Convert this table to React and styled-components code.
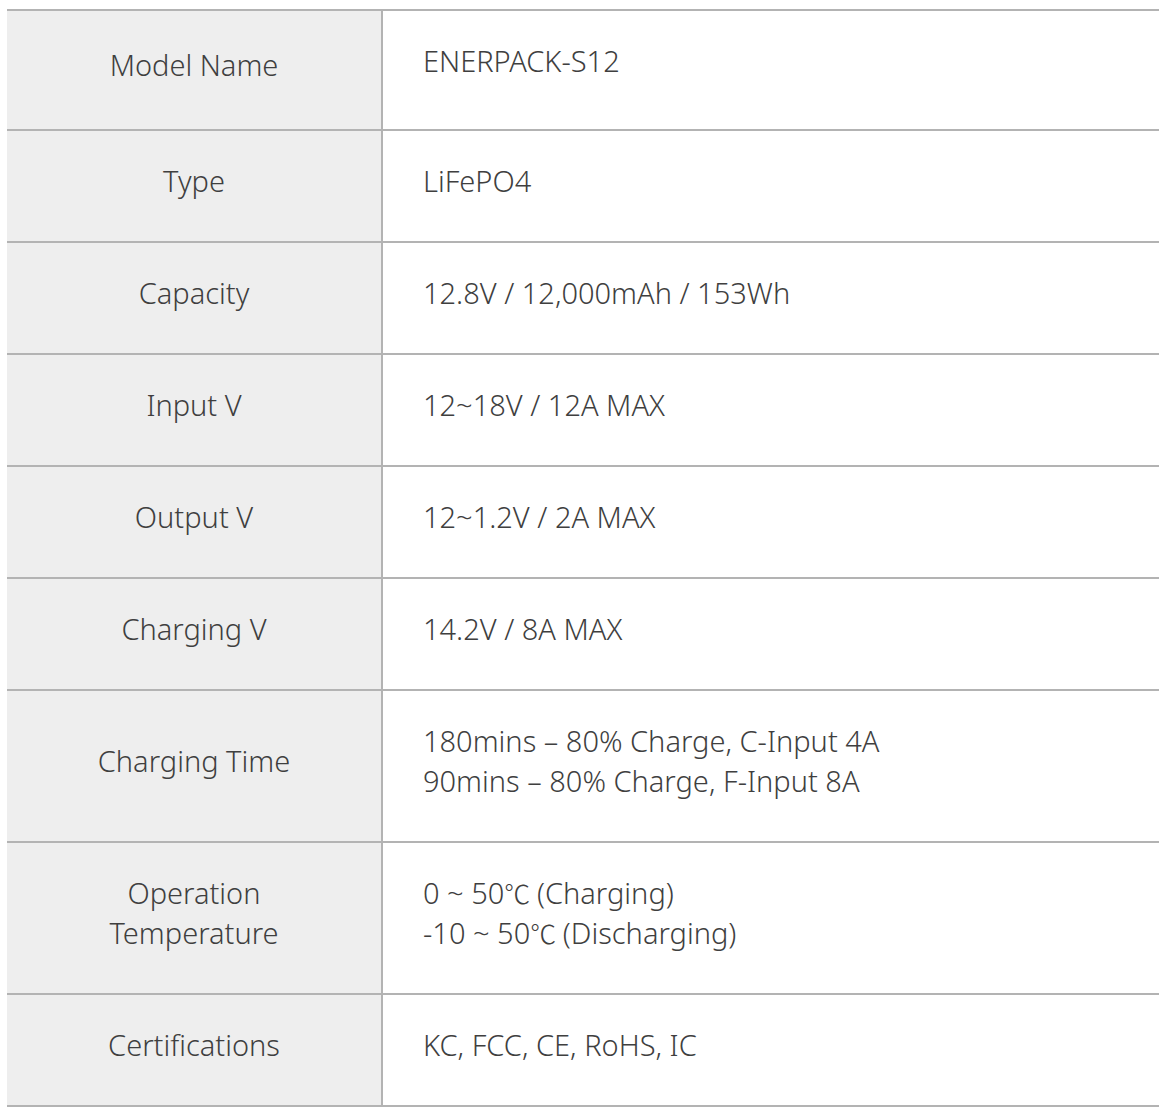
import React from "react";
import styled, { createGlobalStyle } from "styled-components";

const Global = createGlobalStyle`
  html, body { margin: 0; padding: 0; background: #ffffff; }
  body { font-family: "Noto Sans", "Noto Sans CJK KR", sans-serif; }
`;

const Page = styled.div`
  padding: 9px 6px 0 7px;
`;

const Table = styled.div`
  border-top: 2px solid #b3b3b3;
`;

const Row = styled.div`
  display: grid;
  grid-template-columns: 376px 1fr;
  border-bottom: 2px solid #b3b3b3;
  min-height: ${(p) => p.$min || 110}px;
`;

const Label = styled.div`
  background: #eeeeee;
  border-right: 2px solid #b3b3b3;
  display: flex;
  align-items: center;
  justify-content: center;
  text-align: center;
  padding: 30px 20px 40px;
  font-size: 29px;
  font-weight: 350;
  line-height: 40px;
  color: #3f3f3f;
`;

const Value = styled.div`
  padding: 30px 40px 40px;
  font-size: 29px;
  font-weight: 350;
  line-height: 40px;
  color: #3f3f3f;
`;

const Unit = styled.span`
  font-family: "Noto Sans CJK KR", sans-serif;
  font-weight: 300;
  font-size: 26px;
  line-height: 1;
  font-feature-settings: "palt" 1;
  letter-spacing: -1px;
`;

const rows = [
  { label: ["Model Name"], value: ["ENERPACK-S12"], min: 118 },
  { label: ["Type"], value: ["LiFePO4"] },
  { label: ["Capacity"], value: ["12.8V / 12,000mAh / 153Wh"] },
  { label: ["Input V"], value: ["12~18V / 12A MAX"] },
  { label: ["Output V"], value: ["12~1.2V / 2A MAX"] },
  { label: ["Charging V"], value: ["14.2V / 8A MAX"] },
  {
    label: ["Charging Time"],
    value: ["180mins – 80% Charge, C-Input 4A", "90mins – 80% Charge, F-Input 8A"],
  },
  {
    label: ["Operation", "Temperature"],
    value: [
      <>0 ~ 50<Unit>℃</Unit> (Charging)</>,
      <>-10 ~ 50<Unit>℃</Unit> (Discharging)</>,
    ],
  },
  { label: ["Certifications"], value: ["KC, FCC, CE, RoHS, IC"] },
];

const Lines = ({ items }) =>
  items.map((t, i) => (
    <React.Fragment key={i}>
      {i > 0 && <br />}
      {t}
    </React.Fragment>
  ));

export default function App() {
  return (
    <>
      <Global />
      <Page>
        <Table>
          {rows.map((r, i) => (
            <Row key={i} $min={r.min}>
              <Label>
                <div>
                  <Lines items={r.label} />
                </div>
              </Label>
              <Value>
                <Lines items={r.value} />
              </Value>
            </Row>
          ))}
        </Table>
      </Page>
    </>
  );
}
